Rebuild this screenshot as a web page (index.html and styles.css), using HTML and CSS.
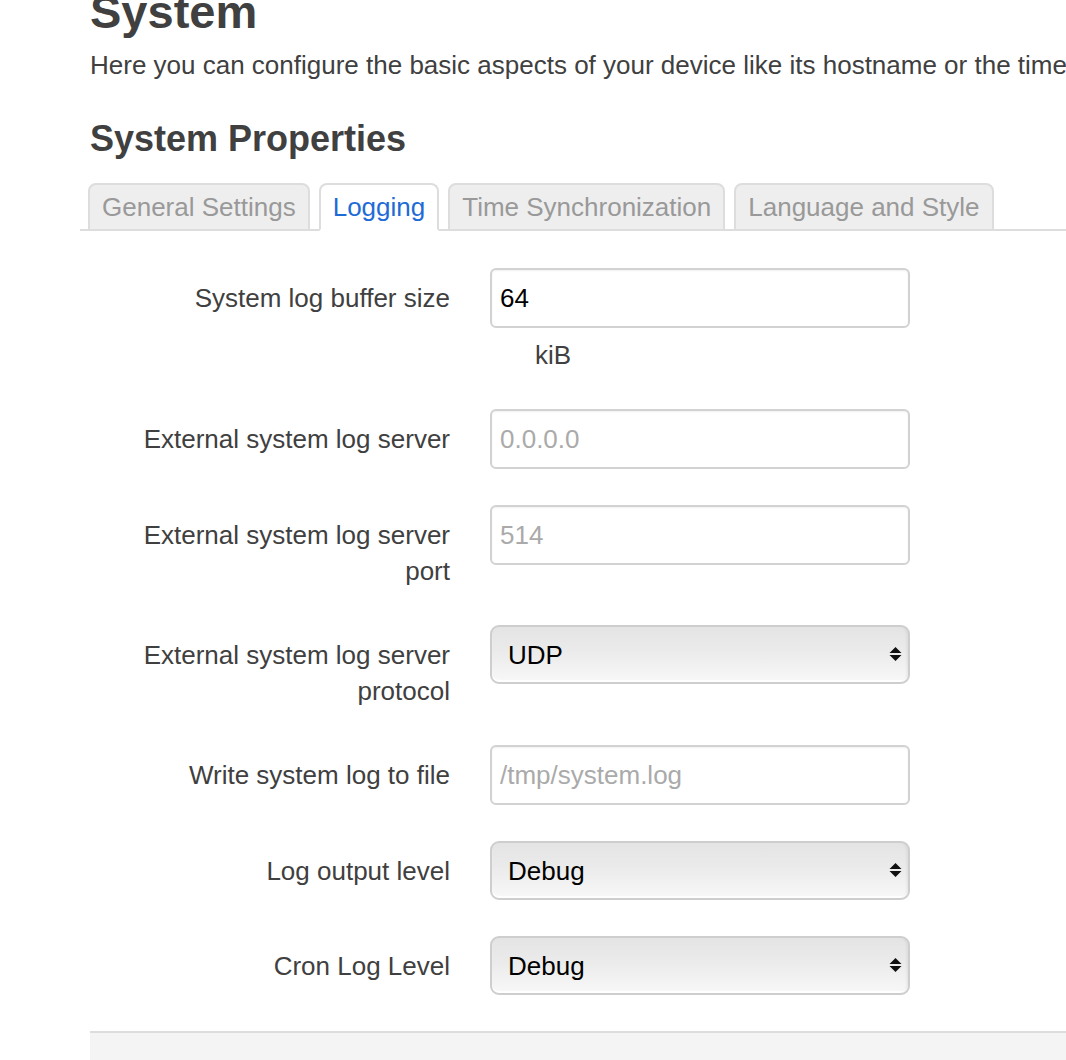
FILE: index.html
```html
<!DOCTYPE html>
<html lang="en">
<head>
<meta charset="utf-8">
<title>System</title>
<link rel="stylesheet" href="styles.css">
</head>
<body>
<div class="page">
  <h2 class="page-title">System</h2>
  <p class="page-desc">Here you can configure the basic aspects of your device like its hostname or the timezone.</p>
  <h3 class="section-title">System Properties</h3>
  <ul class="tabs">
    <li class="tab">General Settings</li>
    <li class="tab active">Logging</li>
    <li class="tab">Time Synchronization</li>
    <li class="tab">Language and Style</li>
  </ul>
  <div class="form">
    <div class="row">
      <label class="label">System log buffer size</label>
      <div class="field">
        <input class="text" type="text" value="64">
        <div class="desc">kiB</div>
      </div>
    </div>
    <div class="row">
      <label class="label">External system log server</label>
      <div class="field"><input class="text" type="text" placeholder="0.0.0.0"></div>
    </div>
    <div class="row">
      <label class="label">External system log server port</label>
      <div class="field"><input class="text" type="text" placeholder="514"></div>
    </div>
    <div class="row">
      <label class="label">External system log server protocol</label>
      <div class="field">
        <div class="select-wrap">
          <select class="select"><option>UDP</option><option>TCP</option></select>
          <svg class="arrows" width="13" height="14" viewBox="0 0 13 14"><path d="M6.5 0 L12.5 6 L0.5 6 Z M0.5 8 L12.5 8 L6.5 14 Z" fill="#111"/></svg>
        </div>
      </div>
    </div>
    <div class="row">
      <label class="label">Write system log to file</label>
      <div class="field"><input class="text" type="text" placeholder="/tmp/system.log"></div>
    </div>
    <div class="row">
      <label class="label">Log output level</label>
      <div class="field">
        <div class="select-wrap">
          <select class="select"><option>Debug</option></select>
          <svg class="arrows" width="13" height="14" viewBox="0 0 13 14"><path d="M6.5 0 L12.5 6 L0.5 6 Z M0.5 8 L12.5 8 L6.5 14 Z" fill="#111"/></svg>
        </div>
      </div>
    </div>
    <div class="row">
      <label class="label">Cron Log Level</label>
      <div class="field">
        <div class="select-wrap">
          <select class="select"><option>Debug</option></select>
          <svg class="arrows" width="13" height="14" viewBox="0 0 13 14"><path d="M6.5 0 L12.5 6 L0.5 6 Z M0.5 8 L12.5 8 L6.5 14 Z" fill="#111"/></svg>
        </div>
      </div>
    </div>
  </div>
  <div class="actions"></div>
</div>
</body>
</html>
```
FILE: styles.css
```css
html, body {
  margin: 0;
  padding: 0;
  background: #fff;
  overflow: hidden;
}
body {
  font-family: "Liberation Sans", Arial, Helvetica, sans-serif;
  color: #404040;
  width: 1066px;
  height: 1060px;
}
.page {
  padding-left: 90px;
}
.page-title {
  font-size: 47px;
  font-weight: bold;
  line-height: 56px;
  margin: -16px 0 0 0;
  color: #404040;
}
.page-desc {
  font-size: 26px;
  line-height: 36px;
  margin: 7px 0 0 0;
  white-space: nowrap;
}
.section-title {
  font-size: 36px;
  font-weight: bold;
  line-height: 44px;
  margin: 34px 0 0 0;
  color: #404040;
}
.tabs {
  list-style: none;
  display: flex;
  gap: 9px;
  margin: 22px 0 0 -10px;
  padding: 0 0 0 8px;
  border-bottom: 2px solid #ddd;
}
.tab {
  font-size: 26px;
  line-height: 43px;
  padding: 1px 12px 0;
  height: 43px;
  border: 2px solid #ddd;
  border-radius: 8px 8px 0 0;
  background: #eee;
  color: #999;
  margin-bottom: -2px;
  white-space: nowrap;
}
.tab.active {
  background: #fff;
  color: #1e6bd6;
  border-bottom-color: #fff;
}
.form {
  padding-top: 37px;
}
.row {
  display: flex;
  gap: 40px;
  margin-bottom: 36px;
  padding-left: 40px;
}
.label {
  width: 320px;
  flex: none;
  text-align: right;
  font-size: 26px;
  line-height: 36px;
  padding-top: 12px;
  color: #404040;
}
.field {
  width: 420px;
  flex: none;
}
.text {
  display: block;
  box-sizing: border-box;
  width: 420px;
  height: 60px;
  margin: 0;
  padding: 0 8px;
  border: 2px solid #d2d2d2;
  border-radius: 6px;
  box-shadow: inset 0 1px 2px rgba(0,0,0,0.06);
  font-family: "Liberation Sans", Arial, Helvetica, sans-serif;
  font-size: 26px;
  color: #000;
  background: #fff;
  outline: none;
}
.text::placeholder {
  color: #aaa;
}
.desc {
  font-size: 26px;
  line-height: 36px;
  margin-top: 9px;
  padding-left: 45px;
  color: #404040;
}
.select-wrap {
  position: relative;
  width: 420px;
  height: 59px;
}
.select {
  -webkit-appearance: none;
  appearance: none;
  display: block;
  box-sizing: border-box;
  width: 420px;
  height: 59px;
  margin: 0;
  padding: 0 40px 0 16px;
  border: 2px solid #cecece;
  border-radius: 9px;
  background: linear-gradient(to bottom, #e4e4e4 0%, #ebebeb 45%, #f8f8f8 100%);
  box-shadow: inset -3px 0 3px -2px rgba(0,0,0,0.08), inset 0 -2px 1px rgba(255,255,255,0.9);
  font-family: "Liberation Sans", Arial, Helvetica, sans-serif;
  font-size: 26px;
  color: #000;
  outline: none;
}
.arrows {
  position: absolute;
  right: 8px;
  top: 22px;
  pointer-events: none;
}
.actions {
  border-top: 2px solid #ddd;
  background: #f4f4f4;
  height: 60px;
  margin-top: 2px;
}
```
